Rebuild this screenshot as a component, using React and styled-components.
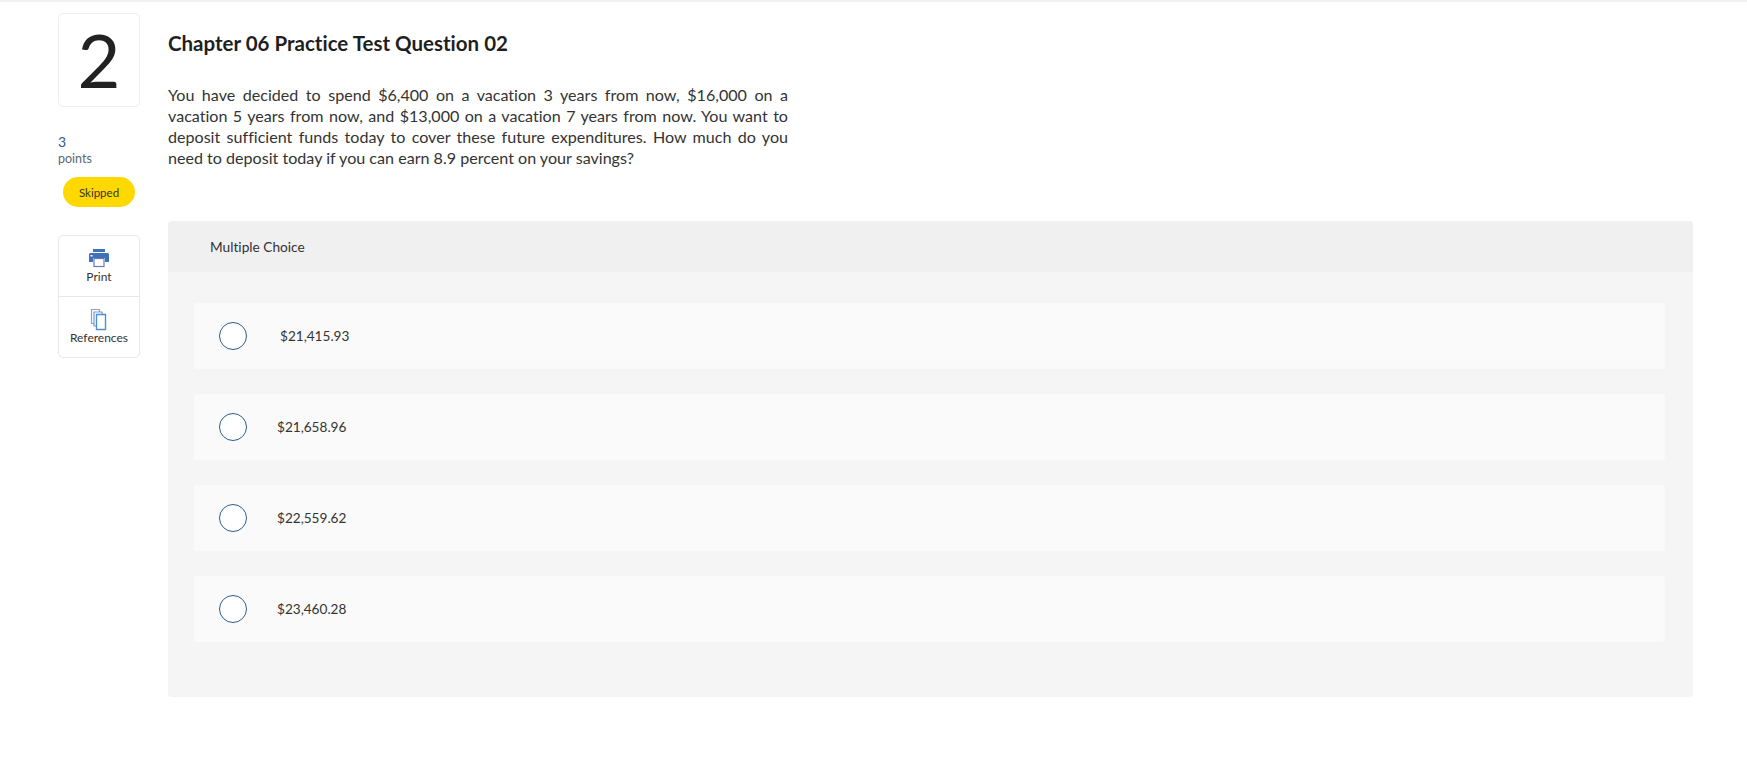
import React from "react";
import styled, { createGlobalStyle } from "styled-components";

const Global = createGlobalStyle`
  html, body { margin: 0; padding: 0; background: #fff; }
  body { font-family: "Lato", "Open Sans", sans-serif; color: #222; font-variant-ligatures: none; }
  #root { width: 1747px; height: 775px; overflow: hidden; }
`;

const TopRule = styled.div`
  height: 2px;
  background: #f2f2f2;
`;

const Page = styled.div`
  display: flex;
  padding: 11px 54px 0 58px;
`;

const Side = styled.aside`
  width: 82px;
  margin-right: 28px;
  flex: none;
`;

const NumberBox = styled.div`
  height: 94px;
  box-sizing: border-box;
  border: 1px solid #eeeeee;
  border-radius: 5px;
  display: flex;
  align-items: center;
  justify-content: center;
  font-size: 74px;
  font-weight: 400;
  color: #222;
  line-height: 1;
`;

const PointsValue = styled.div`
  margin-top: 26px;
  font-size: 14px;
  line-height: 17px;
  color: #2a5d8f;
`;

const PointsLabel = styled.div`
  font-size: 12.5px;
  line-height: 17px;
  color: #5c6670;
`;

const Status = styled.div`
  width: 72px;
  height: 30px;
  margin: 10px 0 0 5px;
  border-radius: 15px;
  background: #ffd800;
  font-size: 11.5px;
  color: #333;
  display: flex;
  align-items: center;
  justify-content: center;
`;

const Tools = styled.div`
  margin-top: 28px;
  border: 1px solid #e8e8e8;
  border-radius: 5px;
`;

const Tool = styled.div`
  height: ${p => p.$height}px;
  box-sizing: border-box;
  display: flex;
  flex-direction: column;
  align-items: center;
  padding-top: ${p => p.$top}px;
  font-size: 12px;
  line-height: 14px;
  color: #333;
  gap: ${p => p.$gap}px;
  & + & { border-top: 1px solid #e8e8e8; }
`;

const Main = styled.main`
  flex: 1;
  min-width: 0;
`;

const Title = styled.h1`
  margin: 18px 0 0;
  font-size: 20.5px;
  line-height: 24px;
  font-weight: 700;
  color: #1f1f1f;
`;

const Prompt = styled.p`
  width: 620px;
  margin: 29px 0 0;
  font-size: 16.1px;
  line-height: 21px;
  text-align: justify;
  color: #333;
`;

const Panel = styled.section`
  margin-top: 53px;
  height: 476px;
  background: #f5f5f5;
  border-radius: 4px;
  overflow: hidden;
`;

const PanelHead = styled.div`
  height: 51px;
  padding-left: 42px;
  display: flex;
  align-items: center;
  background: #f0f0f0;
  font-size: 13.7px;
  color: #333;
`;

const Options = styled.div`
  display: flex;
  flex-direction: column;
  gap: 25px;
  margin: 31px 28px 0 26px;
`;

const Option = styled.label`
  height: 66px;
  display: flex;
  align-items: center;
  padding-left: 25px;
  background: #fafafa;
  border-radius: 3px;
`;

const Radio = styled.span`
  width: 28px;
  height: 28px;
  box-sizing: border-box;
  border: 1.5px solid #2a5d8f;
  border-radius: 50%;
  background: #fff;
  flex: none;
`;

const Answer = styled.span`
  margin-left: ${p => p.$offset}px;
  font-size: 13.6px;
  color: #333;
`;

const PrintIcon = () => (
  <svg width="22" height="20" viewBox="0 0 22 20">
    <path d="M5 1h12v3H5z" fill="#3f72b8" />
    <path d="M2.5 5h17A1.5 1.5 0 0 1 21 6.5V14h-4v-4H5v4H1V6.5A1.5 1.5 0 0 1 2.5 5z" fill="#3f72b8" />
    <rect x="2.5" y="7" width="2" height="1.5" fill="#fff" />
    <rect x="6" y="10.5" width="10" height="8" fill="#fff" stroke="#6a78b8" strokeWidth="1.2" />
  </svg>
);

const RefIcon = () => (
  <svg width="20" height="23" viewBox="0 0 20 23">
    <path d="M2.5 1.5h8v14h-8z" fill="#fff" stroke="#8f9fc8" strokeWidth="1.2" />
    <path d="M5 4h8v14H5z" fill="#fff" stroke="#6f9ad0" strokeWidth="1.2" />
    <path d="M7.5 6.5h9v15h-9z" fill="#fff" stroke="#4d8fd6" strokeWidth="1.4" />
  </svg>
);

const choices = [
  { value: "$21,415.93", offset: 33 },
  { value: "$21,658.96", offset: 30 },
  { value: "$22,559.62", offset: 30 },
  { value: "$23,460.28", offset: 30 },
];

export default function App() {
  return (
    <>
      <Global />
      <TopRule />
      <Page>
        <Side>
          <NumberBox>2</NumberBox>
          <PointsValue>3</PointsValue>
          <PointsLabel>points</PointsLabel>
          <Status>Skipped</Status>
          <Tools>
            <Tool $height={60} $top={12} $gap={2}><PrintIcon />Print</Tool>
            <Tool $height={61} $top={11} $gap={0}><RefIcon />References</Tool>
          </Tools>
        </Side>
        <Main>
          <Title>Chapter 06 Practice Test Question 02</Title>
          <Prompt>
            You have decided to spend $6,400 on a vacation 3 years from now, $16,000 on a vacation 5 years from now, and $13,000 on a vacation 7 years from now. You want to deposit sufficient funds today to cover these future expenditures. How much do you need to deposit today if you can earn 8.9 percent on your savings?
          </Prompt>
          <Panel>
            <PanelHead>Multiple Choice</PanelHead>
            <Options>
              {choices.map(c => (
                <Option key={c.value}>
                  <Radio />
                  <Answer $offset={c.offset}>{c.value}</Answer>
                </Option>
              ))}
            </Options>
          </Panel>
        </Main>
      </Page>
    </>
  );
}
